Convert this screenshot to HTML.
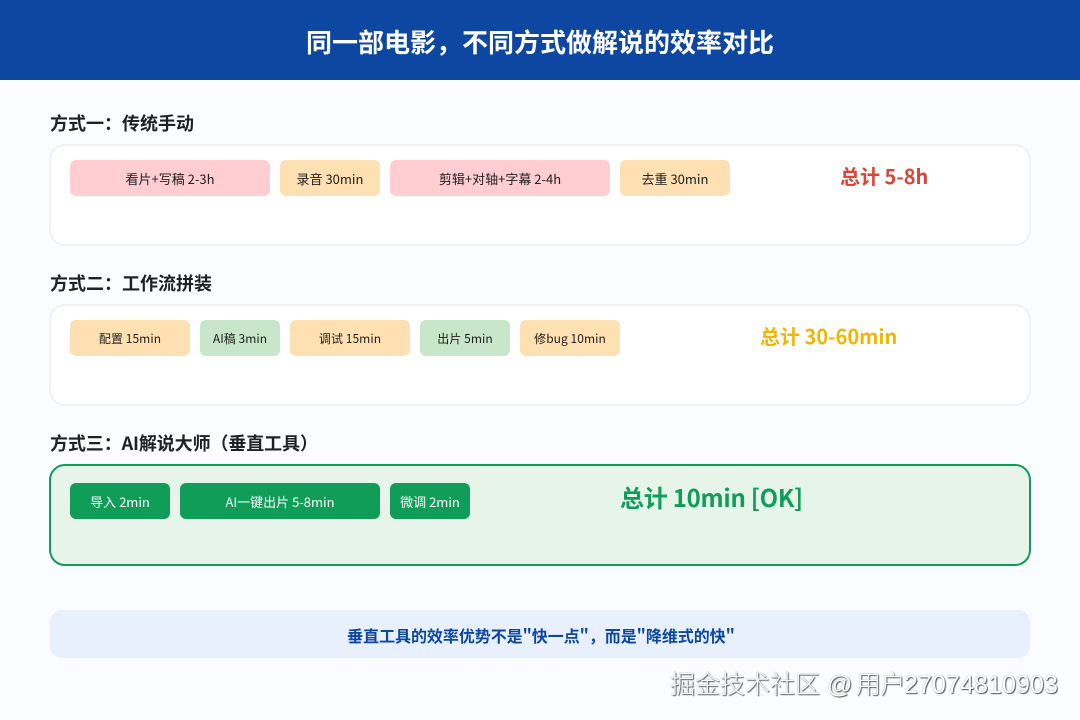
<!DOCTYPE html>
<html lang="zh-CN"><head><meta charset="utf-8">
<style>
html,body{margin:0;padding:0;width:1080px;height:720px;overflow:hidden;background:#fafcff;font-family:"Noto Sans CJK SC","Liberation Sans",sans-serif;}
.a{position:absolute;white-space:nowrap}
#page{position:relative;width:1080px;height:720px;overflow:hidden}
.hd{left:0;top:0;width:1080px;height:80px;background:#0d47a1;color:#fff;font-size:26px;font-weight:700;line-height:84px;text-align:center}
.h{left:50px;font-size:18px;font-weight:700;color:#212121;line-height:26px;height:26px}
.p{height:36px;line-height:37px;border-radius:6px;text-align:center;font-size:13px;color:#212121}
.s{font-size:12px;letter-spacing:.05px}
.r{background:#ffcdd2}.o{background:#ffe0b2}.g{background:#c8e6c9}.d{background:#0f9d58;color:#fff}
.t{font-size:20px;font-weight:700;line-height:30px}
.w{top:667px;font-family:'Liberation Sans','Noto Sans CJK SC',sans-serif;font-size:25px;font-weight:300;line-height:36px;color:#fff;text-shadow:1px 1px 1px #555,0 0 1px #777}
svg{position:absolute;left:0;top:0}
</style></head><body><div id="page">
<svg width="1080" height="720" viewBox="0 0 1080 720">
<rect x="50" y="145" width="980" height="100" rx="15" fill="#fff" stroke="#eceef1" stroke-width="1.5"/>
<rect x="50" y="305" width="980" height="100" rx="15" fill="#fff" stroke="#eceef1" stroke-width="1.5"/>
<rect x="50" y="465" width="980" height="100" rx="15" fill="#e6f4ea" stroke="#0f9d58" stroke-width="2"/>
</svg>
<div class="a hd">同一部电影，不同方式做解说的效率对比</div>

<div class="a h" style="top:110px">方式一：传统手动</div>
<div class="a p r" style="left:70px;top:160px;width:200px">看片+写稿 2-3h</div>
<div class="a p o" style="left:280px;top:160px;width:100px">录音 30min</div>
<div class="a p r" style="left:390px;top:160px;width:220px">剪辑+对轴+字幕 2-4h</div>
<div class="a p o" style="left:620px;top:160px;width:110px">去重 30min</div>
<div class="a t" style="left:840px;top:161px;color:#db4437">总计 5-8h</div>

<div class="a h" style="top:270px">方式二：工作流拼装</div>
<div class="a p o s" style="left:70px;top:320px;width:120px">配置 15min</div>
<div class="a p g s" style="left:200px;top:320px;width:80px">AI稿 3min</div>
<div class="a p o s" style="left:290px;top:320px;width:120px">调试 15min</div>
<div class="a p g s" style="left:420px;top:320px;width:90px">出片 5min</div>
<div class="a p o s" style="left:520px;top:320px;width:100px">修bug 10min</div>
<div class="a t" style="left:760px;top:321px;color:#f4b400">总计 30-60min</div>

<div class="a h" style="top:430px;letter-spacing:-.1px">方式三：AI解说大师（垂直工具）</div>
<div class="a p d" style="left:70px;top:483px;width:100px">导入 2min</div>
<div class="a p d" style="left:180px;top:483px;width:200px">AI一键出片 5-8min</div>
<div class="a p d" style="left:390px;top:483px;width:80px">微调 2min</div>
<div class="a t" style="left:620px;top:480px;font-size:24px;line-height:34px;color:#0f9d58;letter-spacing:-.25px">总计 10min [OK]</div>

<div class="a" style="left:50px;top:610px;width:980px;height:48px;background:#e8f0fe;border-radius:12px;color:#0d47a1;font-size:16px;font-weight:700;line-height:51px;text-align:center;letter-spacing:-.05px;text-indent:2px">垂直工具的效率优势不是"快一点"，而是"降维式的快"</div>

<div class="a w" style="left:670px">掘金技术社区</div>
<div class="a w" style="left:827px">@</div>
<div class="a w" style="left:856px;letter-spacing:-.5px">用户</div>
<div class="a w" style="left:904px;letter-spacing:.1px">27074810903</div>
</div></body></html>
